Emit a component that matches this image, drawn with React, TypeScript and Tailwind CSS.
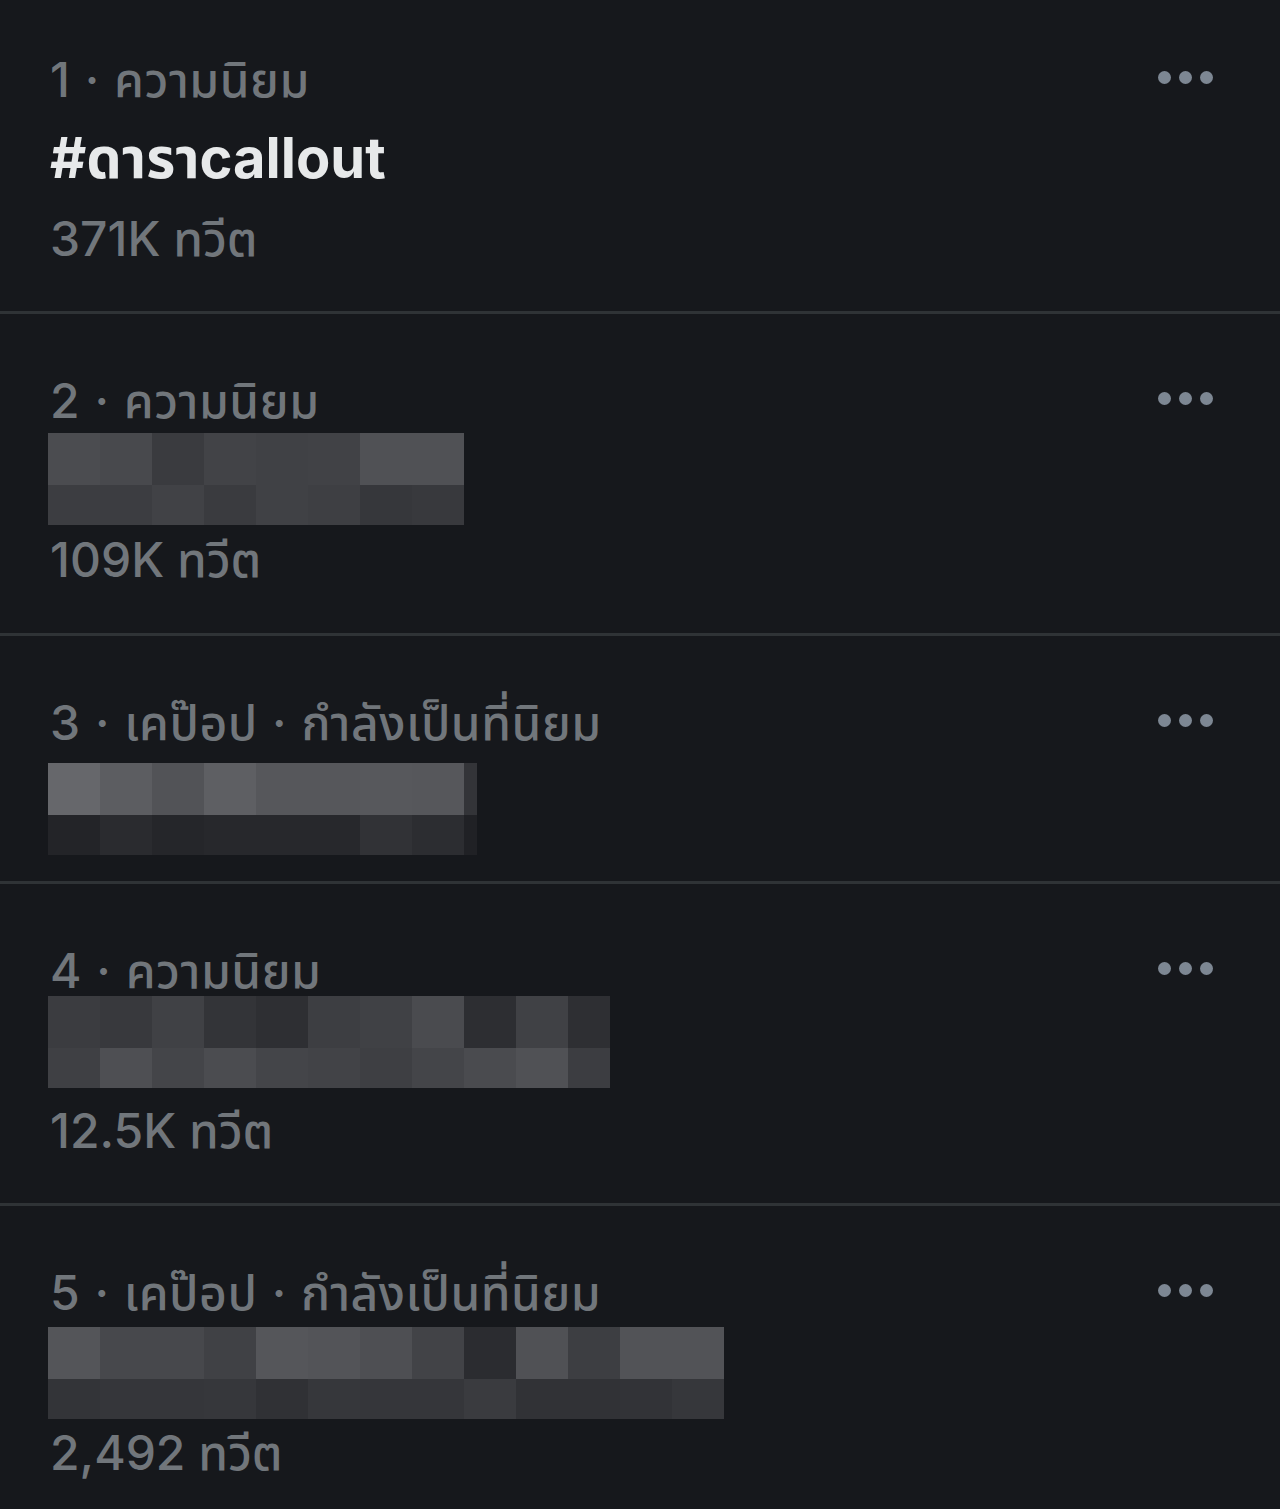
import React from "react";

type Trend = {
    category: string;
    title?: string;
    blur?: { width: number; top: string[]; bottom: string[]; lastWidth?: number };
    count?: string;
    pad: string;
    blurMargin?: string;
    countMargin?: string;
};

const trends: Trend[] = [
    {
        category: "1 · ความนิยม",
        title: "#ดาราcallout",
        count: "371K ทวีต",
        pad: "pt-[50px] pb-[42px]",
        countMargin: "mt-[16px]",
    },
    {
        category: "2 · ความนิยม",
        blur: {
            width: 417,
            top: ["#4b4c50", "#48494d", "#3a3b3f", "#424347", "#404145", "#414246", "#505155", "#505155"],
            bottom: ["#3c3d41", "#3c3d41", "#414246", "#3a3b3f", "#404145", "#3e3f43", "#36373b", "#38393d"],
        },
        count: "109K ทวีต",
        pad: "pt-[57px] pb-[43px]",
        blurMargin: "mt-[2px]",
        countMargin: "mt-[5px]",
    },
    {
        category: "3 · เคป๊อป · กำลังเป็นที่นิยม",
        blur: {
            width: 430,
            lastWidth: 13,
            top: ["#66676b", "#5c5d61", "#525357", "#5e5f63", "#56575b", "#56575b", "#57585c", "#56575b", "#333438"],
            bottom: ["#232428", "#2a2b2f", "#25262a", "#27282c", "#27282c", "#27282c", "#313236", "#2c2d31", "#202125"],
        },
        pad: "pt-[57px] pb-[26px]",
        blurMargin: "mt-[10px]",
    },
    {
        category: "4 · ความนิยม",
        blur: {
            width: 562,
            lastWidth: 42,
            top: ["#3b3c40", "#38393d", "#404145", "#333438", "#2e2f33", "#3d3e42", "#404145", "#4a4b4f", "#2d2e32", "#404145", "#2e2f33"],
            bottom: ["#3f4044", "#4e4f53", "#444549", "#4b4c50", "#444549", "#424347", "#3e3f43", "#444549", "#4a4b4f", "#505155", "#3c3d41"],
        },
        count: "12.5K ทวีต",
        pad: "pt-[57px] pb-[42px]",
        blurMargin: "-mt-[5px]",
        countMargin: "mt-[13px]",
    },
    {
        category: "5 · เคป๊อป · กำลังเป็นที่นิยม",
        blur: {
            width: 676,
            top: ["#545559", "#47484c", "#47484c", "#404145", "#55565a", "#535458", "#4e4f53", "#424347", "#2b2c30", "#505155", "#3d3e42", "#525357", "#525357"],
            bottom: ["#333438", "#35363a", "#35363a", "#36373b", "#303135", "#36373b", "#35363a", "#35363a", "#3a3b3f", "#313236", "#313236", "#323337", "#36373b"],
        },
        count: "2,492 ทวีต",
        pad: "pt-[57px] pb-[26px]",
        blurMargin: "mt-[4px]",
        countMargin: "mt-[4px]",
    },
];

const Dots = () => (
    <div className="flex h-[60px] items-center gap-[8px] pb-[5px]">
        <span className="block h-[13px] w-[13px] rounded-full bg-[#7d8793]" />
        <span className="block h-[13px] w-[13px] rounded-full bg-[#7d8793]" />
        <span className="block h-[13px] w-[13px] rounded-full bg-[#7d8793]" />
    </div>
);

const Mosaic = ({ blur }: { blur: NonNullable<Trend["blur"]> }) => {
    const cellWidth = (i: number, n: number) =>
        i === n - 1 && blur.lastWidth ? blur.lastWidth : 52;
    return (
        <div className="flex flex-col" style={{ width: blur.width }}>
            <div className="flex h-[52px]">
                {blur.top.map((c, i) => (
                    <div key={i} className="h-full shrink-0" style={{ width: cellWidth(i, blur.top.length), backgroundColor: c }} />
                ))}
            </div>
            <div className="flex h-[40px]">
                {blur.bottom.map((c, i) => (
                    <div key={i} className="h-full shrink-0" style={{ width: cellWidth(i, blur.bottom.length), backgroundColor: c }} />
                ))}
            </div>
        </div>
    );
};

const TrendRow = ({ trend, last }: { trend: Trend; last: boolean }) => (
    <div className={`pl-[48px] pr-[67px] ${trend.pad} ${last ? "" : "border-b-[3px] border-[#2f3336]"}`}>
        <div className="flex items-start justify-between">
            <div className="pl-[2px] text-[48px] font-medium leading-[60px] tracking-[0.5px] [word-spacing:1px] text-[#71767b] whitespace-nowrap">
                {trend.category}
            </div>
            <Dots />
        </div>
        {trend.title && (
            <div className="mt-[13px] pl-[2px] text-[56px] font-bold leading-[70px] text-[#e7e9ea]">
                {trend.title}
            </div>
        )}
        {trend.blur && (
            <div className={trend.blurMargin}>
                <Mosaic blur={trend.blur} />
            </div>
        )}
        {trend.count && (
            <div className={`${trend.countMargin} pl-[2px] text-[48px] font-medium leading-[60px] text-[#71767b]`}>
                {trend.count}
            </div>
        )}
    </div>
);

export default function App() {
    return (
        <div
            className="min-h-[1509px] w-[1280px] bg-[#16181c]"
            style={{ fontFamily: 'Inter, "Noto Sans", "Noto Sans Thai", "DejaVu Sans", sans-serif' }}
        >
            {trends.map((t, i) => (
                <TrendRow key={i} trend={t} last={i === trends.length - 1} />
            ))}
        </div>
    );
}
